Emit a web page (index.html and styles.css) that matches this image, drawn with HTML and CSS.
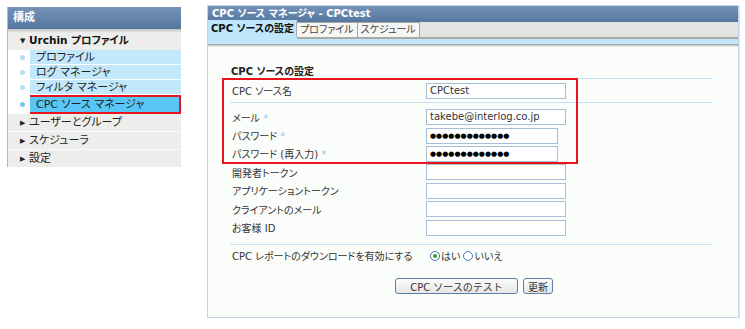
FILE: index.html
```html
<!DOCTYPE html>
<html lang="ja">
<head>
    <meta charset="UTF-8">
    <title>CPC ソース マネージャ</title>
    <link rel="stylesheet" href="styles.css">
</head>
<body>
    <div class="page">
        <div class="side">
            <div class="side-head">構成</div>
            <div class="side-group"><span class="arrow">▼</span>Urchin プロファイル</div>
            <div class="side-sub">
                <div class="sub-item"><span class="dot"></span><span class="sub-label">プロファイル</span></div>
                <div class="sub-item"><span class="dot"></span><span class="sub-label">ログ マネージャ</span></div>
                <div class="sub-item"><span class="dot"></span><span class="sub-label">フィルタ マネージャ</span></div>
                <div class="sub-item selected"><span class="dot"></span><span class="sub-label">CPC ソース マネージャ</span></div>
            </div>
            <div class="side-row"><span class="arrow">▶</span>ユーザーとグループ</div>
            <div class="side-row"><span class="arrow">▶</span>スケジューラ</div>
            <div class="side-row last"><span class="arrow">▶</span>設定</div>
        </div>

        <div class="panel">
            <div class="panel-title">CPC ソース マネージャ - CPCtest</div>
            <div class="tabs">
                <div class="tab active">CPC ソースの設定</div>
                <div class="tab">プロファイル</div>
                <div class="tab">スケジュール</div>
            </div>
            <div class="tab-strip"></div>
            <div class="content">
                <div class="section-title">CPC ソースの設定</div>
                <div class="form">
                    <div class="mark"></div>
                    <div class="row first">
                        <span class="label">CPC ソース名</span>
                        <span class="field">CPCtest</span>
                    </div>
                    <div class="rows">
                        <div class="row">
                            <span class="label">メール <i class="req">*</i></span>
                            <span class="field">takebe@interlog.co.jp</span>
                        </div>
                        <div class="row">
                            <span class="label">パスワード <i class="req">*</i></span>
                            <span class="field short dots">●●●●●●●●●●●●●</span>
                        </div>
                        <div class="row">
                            <span class="label">パスワード (再入力) <i class="req">*</i></span>
                            <span class="field short dots">●●●●●●●●●●●●●</span>
                        </div>
                        <div class="row">
                            <span class="label">開発者トークン</span>
                            <span class="field"></span>
                        </div>
                        <div class="row">
                            <span class="label">アプリケーショントークン</span>
                            <span class="field"></span>
                        </div>
                        <div class="row">
                            <span class="label">クライアントのメール</span>
                            <span class="field"></span>
                        </div>
                        <div class="row">
                            <span class="label">お客様 ID</span>
                            <span class="field"></span>
                        </div>
                    </div>
                    <div class="row radio-row">
                        <span class="label">CPC レポートのダウンロードを有効にする</span>
                        <span class="radios">
                            <span class="radio on"></span>はい
                            <span class="radio"></span>いいえ
                        </span>
                    </div>
                    <div class="buttons">
                        <button class="btn wide">CPC ソースのテスト</button>
                        <button class="btn">更新</button>
                    </div>
                </div>
            </div>
        </div>
    </div>
</body>
</html>
```

FILE: styles.css
```css
* {
    margin: 0;
    padding: 0;
    box-sizing: border-box;
}

body {
    font-family: 'DejaVu Sans', 'Noto Sans CJK JP', sans-serif;
    font-size: 10px;
    color: #222;
    background: #fff;
    font-feature-settings: "palt";
}

.page {
    display: flex;
    align-items: flex-start;
    padding: 5px 0 0 7px;
    gap: 26px;
}

/* left menu */
.side {
    width: 174px;
    margin-top: 2px;
    border-left: 1px solid #b8b8b8;
    background: #ededeb;
}

.side-head {
    height: 22px;
    line-height: 22px;
    padding-left: 5px;
    color: #fff;
    font-weight: bold;
    font-size: 11px;
    background: linear-gradient(#7693b8, #55779f);
}

.arrow {
    display: inline-block;
    width: 9px;
    font-size: 7px;
    vertical-align: 1px;
    font-weight: normal;
    color: #222;
}

.side-group {
    height: 21px;
    line-height: 23px;
    padding-left: 12px;
    font-weight: bold;
    font-size: 10.5px;
    color: #111;
    background: linear-gradient(#c4c4c4 0, #ededeb 4px);
}

.side-sub {
    background: #fff;
}

.sub-item {
    display: flex;
    align-items: center;
    height: 15px;
    border-bottom: 1px solid #fff;
}

.dot {
    width: 22px;
    height: 100%;
    position: relative;
    background: #fff;
}

.dot::after {
    content: "";
    position: absolute;
    left: 12px;
    top: 5px;
    width: 5px;
    height: 5px;
    border-radius: 50%;
    background: #b8dcf0;
}

.sub-label {
    flex: 1;
    height: 100%;
    line-height: 15px;
    padding-left: 6px;
    font-size: 11px;
    color: #222;
    background: #c3e8fc;
}

.sub-item.selected {
    height: 19px;
    border-bottom: none;
}

.sub-item.selected .dot::after {
    top: 7px;
    background: #7cc6ee;
}

.sub-item.selected .sub-label {
    margin-left: -3px;
    line-height: 15px;
    padding-left: 7px;
    background: #58c6f6;
    border: 2px solid #e8141c;
}

.side-row {
    height: 18px;
    line-height: 18px;
    padding-left: 12px;
    font-size: 11px;
    color: #222;
    border-bottom: 1px solid #fafafa;
}

.side-row.last {
    height: 17px;
    border-bottom: none;
}

/* right panel */
.panel {
    width: 532px;
    height: 313px;
    border: 1px solid #c4d6ea;
    box-shadow: 1px 1px 0 #dbe6f2;
    background: #fbfdfa;
}

.panel-title {
    height: 16px;
    line-height: 16px;
    padding-left: 4px;
    color: #fff;
    font-weight: bold;
    font-size: 10px;
    background: linear-gradient(#7492b8, #55779f);
}

.tabs {
    display: flex;
    align-items: flex-end;
    height: 17px;
    background: #e3e3e1;
    border-bottom: 2px solid #a9a9a7;
}

.tab {
    height: 15px;
    line-height: 14px;
    padding: 0 3px;
    font-size: 10px;
    color: #444;
    background: #f6f6f4;
    border: 1px solid #a8a8a8;
    border-bottom: none;
    margin-right: -1px;
}

.tab.active {
    height: 19px;
    line-height: 18px;
    margin-bottom: -2px;
    font-weight: bold;
    color: #111;
    background: #bfe6fa;
    border: none;
}

.tab-strip {
    height: 8px;
    background: linear-gradient(#bfe6fa 0, #bfe6fa 5px, #9a9a9a 5px, #d8d8d8 7px, #fbfdfa 8px);
}

.content {
    padding: 19px 25px 0 22px;
}

.section-title {
    font-weight: bold;
    font-size: 10px;
    height: 13px;
    line-height: 11px;
    padding-left: 1px;
    border-bottom: 1px solid #c6e3f5;
}

.form {
    position: relative;
}

.mark {
    position: absolute;
    left: -8px;
    top: -1px;
    width: 356px;
    height: 86px;
    border: 2px solid #e8141c;
    pointer-events: none;
}

.row {
    display: flex;
    align-items: center;
    height: 18px;
}

.row.first {
    height: 24px;
    border-bottom: 1px solid #c6e3f5;
}

.rows {
    padding: 5px 0 7px;
    border-bottom: 1px solid #c6e3f5;
}

.rows .row {
    height: 18.4px;
}

.label {
    width: 196px;
    padding-left: 2px;
    color: #333;
}

.req {
    font-style: normal;
    color: #9cc6e6;
}

.field {
    width: 140px;
    height: 16px;
    line-height: 14px;
    padding-left: 3px;
    font-size: 10px;
    color: #333;
    background: #fff;
    border: 1px solid #a8bfd8;
}

.field.short {
    width: 132px;
}

.field.dots {
    font-size: 7px;
    line-height: 15px;
    letter-spacing: 0;
    color: #000;
}

.radio-row {
    height: 22px;
}

.radios {
    display: flex;
    align-items: center;
    padding-left: 4px;
    color: #333;
}

.radio {
    width: 10px;
    height: 10px;
    border-radius: 50%;
    border: 1px solid #4b7bb5;
    background: #fff;
    margin-right: 1px;
    position: relative;
}

.radio:nth-of-type(2) {
    margin-left: 3px;
}

.radio.on::after {
    content: "";
    position: absolute;
    left: 2px;
    top: 2px;
    width: 4px;
    height: 4px;
    border-radius: 50%;
    background: #2aa52a;
}

.buttons {
    display: flex;
    gap: 5px;
    margin-top: 11px;
    padding-left: 165px;
}

.btn {
    height: 16px;
    padding: 0 4px;
    font-family: 'DejaVu Sans', 'Noto Sans CJK JP', sans-serif;
    font-size: 10px;
    color: #333;
    background: linear-gradient(#fcfcfc, #e6e6e6);
    border: 1px solid #5d7ea6;
    border-radius: 3px;
}

.btn.wide {
    width: 123px;
}
```
